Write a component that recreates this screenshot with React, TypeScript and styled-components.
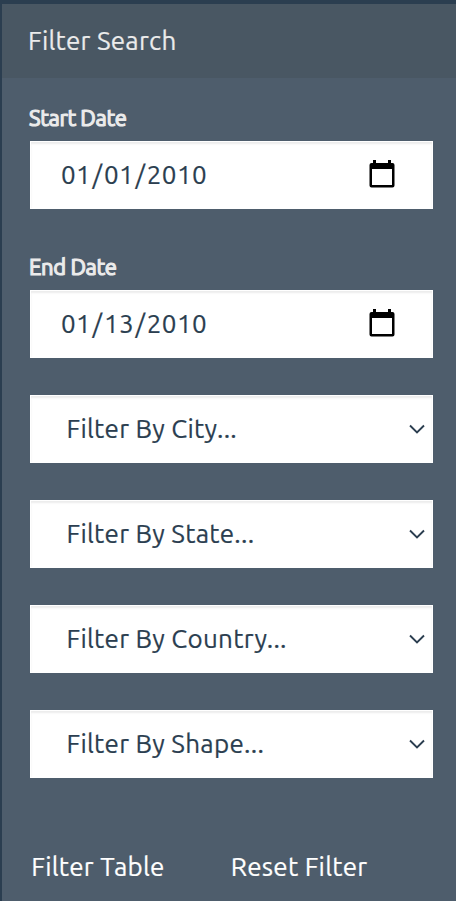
import React from "react";
import styled, { createGlobalStyle } from "styled-components";

const GlobalStyle = createGlobalStyle`
  * { box-sizing: border-box; }
  body {
    margin: 0;
    background: #2b3e50;
    font-family: Ubuntu, "Noto Sans", "Open Sans", sans-serif;
    font-size: 26px;
    line-height: 36px;
  }
`;

const Card = styled.section`
  height: 901px;
  border: solid #2b3e50;
  border-width: 4px 0 0 2px;
  background: #4e5d6c;
  overflow: hidden;
`;

const Header = styled.header`
  height: 74px;
  padding: 19px 26px;
  background: #495763;
  color: #ebebeb;
  white-space: nowrap;
  letter-spacing: 0.25px;
  -webkit-text-stroke: 0.2px;
`;

const Form = styled.form`
  display: flex;
  flex-direction: column;
  padding: 19px 23px 0 28px;
`;

const Group = styled.div`
  display: flex;
  flex-direction: column;
  margin-bottom: 37px;
`;

const Label = styled.label`
  height: 44px;
  margin-left: -1px;
  padding-top: 4px;
  line-height: 33px;
  font-size: 22px;
  font-weight: 400;
  -webkit-text-stroke: 1.2px #ebebeb;
  color: #ebebeb;
  letter-spacing: -0.35px;
`;

const Control = styled.div`
  display: flex;
  align-items: center;
  height: 68px;
  background: #fff;
  border: 1px solid #fff;
  box-shadow: inset 0 2px 2px rgba(0, 0, 0, 0.075);
  color: #2b3e50;
`;

const DateInput = styled.input`
  flex: 1;
  min-width: 0;
  height: 36px;
  padding: 0 0 0 29px;
  border: 0;
  outline: 0;
  background: none;
  color: inherit;
  font: inherit;
  letter-spacing: 0.4px;
  -webkit-text-stroke: 0.2px;

  &::-webkit-datetime-edit-text {
    padding: 0 0.4px;
  }

  &::-webkit-calendar-picker-indicator {
    display: none;
  }
`;

const CalendarIcon = styled.svg`
  width: 26px;
  height: 28px;
  margin: 0 37.5px 2px 0;
`;

const SelectButton = styled.button`
  display: flex;
  flex: 1;
  align-items: center;
  justify-content: space-between;
  padding: 0 7px 0 35.5px;
  border: 0;
  background: none;
  color: inherit;
  font: inherit;
  letter-spacing: 0.27px;
  -webkit-text-stroke: 0.2px;
`;

const Chevron = styled.svg`
  width: 16px;
  height: 10px;
`;

const Actions = styled.div`
  display: flex;
  gap: 66px;
  margin-top: 34px;
  padding-left: 1.2px;
`;

const Action = styled.button`
  padding: 0;
  border: 0;
  background: none;
  color: #fff;
  font: inherit;
  white-space: nowrap;
  letter-spacing: 0.27px;
  -webkit-text-stroke: 0.2px;
`;

const dates = [
  { id: "start", label: "Start Date", value: "2010-01-01" },
  { id: "end", label: "End Date", value: "2010-01-13" },
];

const selects = ["City", "State", "Country", "Shape"];

export default function App() {
  return (
    <>
      <GlobalStyle />
      <Card>
        <Header>Filter Search</Header>
        <Form onSubmit={(e) => e.preventDefault()}>
          {dates.map((d) => (
            <Group key={d.id}>
              <Label htmlFor={d.id}>{d.label}</Label>
              <Control>
                <DateInput type="date" id={d.id} defaultValue={d.value} />
                <CalendarIcon viewBox="0 0 26 28" aria-hidden="true">
                  <path
                    fill="#000"
                    fillRule="evenodd"
                    d="M4 0h3v3h12V0h3v3h1.5A2 2 0 0 1 25.5 5v20.5a2 2 0 0 1-2 2h-21a2 2 0 0 1-2-2V5a2 2 0 0 1 2-2H4zM3 9v16h20V9z"
                  />
                </CalendarIcon>
              </Control>
            </Group>
          ))}
          {selects.map((name) => (
            <Group key={name}>
              <Control>
                <SelectButton type="button">
                  {`Filter By ${name}...`}
                  <Chevron viewBox="0 0 16 10" aria-hidden="true">
                    <path d="M1 1.5l7 7 7-7" fill="none" stroke="#2b3e50" strokeWidth="1.9" />
                  </Chevron>
                </SelectButton>
              </Control>
            </Group>
          ))}
          <Actions>
            <Action>Filter Table</Action>
            <Action type="button">Reset Filter</Action>
          </Actions>
        </Form>
      </Card>
    </>
  );
}
